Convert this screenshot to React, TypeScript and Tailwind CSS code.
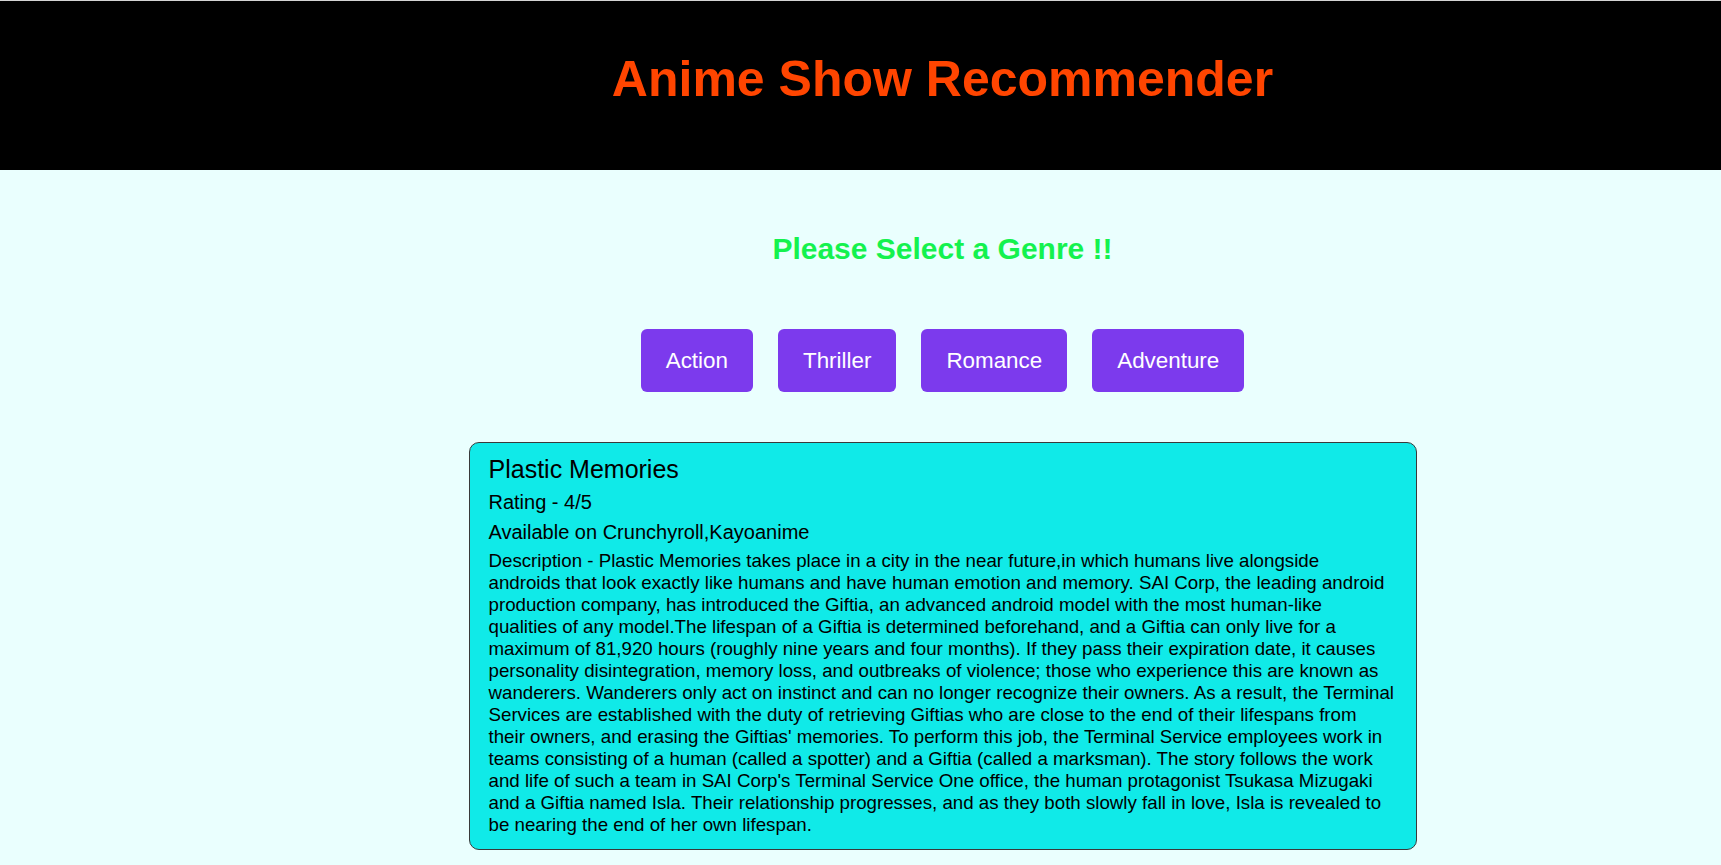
const genres = ["Action", "Thriller", "Romance", "Adventure"];

const descriptionLines = [
  "Description - Plastic Memories takes place in a city in the near future,in which humans live alongside",
  "androids that look exactly like humans and have human emotion and memory. SAI Corp, the leading android",
  "production company, has introduced the Giftia, an advanced android model with the most human-like",
  "qualities of any model.The lifespan of a Giftia is determined beforehand, and a Giftia can only live for a",
  "maximum of 81,920 hours (roughly nine years and four months). If they pass their expiration date, it causes",
  "personality disintegration, memory loss, and outbreaks of violence; those who experience this are known as",
  "wanderers. Wanderers only act on instinct and can no longer recognize their owners. As a result, the Terminal",
  "Services are established with the duty of retrieving Giftias who are close to the end of their lifespans from",
  "their owners, and erasing the Giftias' memories. To perform this job, the Terminal Service employees work in",
  "teams consisting of a human (called a spotter) and a Giftia (called a marksman). The story follows the work",
  "and life of such a team in SAI Corp's Terminal Service One office, the human protagonist Tsukasa Mizugaki",
  "and a Giftia named Isla. Their relationship progresses, and as they both slowly fall in love, Isla is revealed to",
  "be nearing the end of her own lifespan.",
];

export default function App() {
  return (
    <div className="min-h-screen bg-[#eafffe] font-['Liberation_Sans',Arial,sans-serif] border-t border-[#d4d4d4]">
      <header className="h-[169px] bg-black pl-[164px] pt-[49px] text-center">
        <h1 className="text-[50px] leading-[58px] font-bold text-[#ff4500]">
          Anime Show Recommender
        </h1>
      </header>

      <main className="pl-[164px] flex flex-col items-center">
        <h2 className="mt-[61px] text-[30px] leading-[35px] font-bold text-[#14f24e]">
          Please Select a Genre !!
        </h2>

        <div className="mt-[63px] flex gap-[25px]">
          {genres.map((g) => (
            <button
              key={g}
              className="h-[63px] px-[25px] rounded-md bg-[#7c3aed] text-white text-[22.4px] leading-[25px]"
            >
              {g}
            </button>
          ))}
        </div>

        <ShowCard />
      </main>
    </div>
  );
}

function ShowCard() {
  return (
    <div className="mt-[50px] w-[948px] rounded-[10px] border border-[#3a3a3a] bg-[#10eae8] pl-[19px] pr-[11px] pt-[12px] pb-[13px] text-black">
      <div className="text-[25px] leading-[29px]">Plastic Memories</div>
      <div className="mt-[7px] text-[20px] leading-[23px]">Rating - 4/5</div>
      <div className="mt-[7px] text-[20px] leading-[23px]">
        Available on Crunchyroll,Kayoanime
      </div>
      <div className="mt-[6px] text-[18.72px] leading-[22px] whitespace-nowrap">
        {descriptionLines.map((line, i) => (
          <div key={i}>{line}</div>
        ))}
      </div>
    </div>
  );
}
